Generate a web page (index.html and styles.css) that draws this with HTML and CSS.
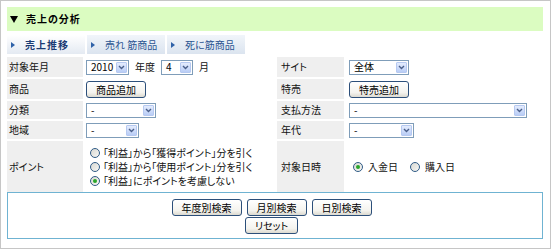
FILE: index.html
```html
<!DOCTYPE html>
<html lang="ja">
<head>
<meta charset="utf-8">
<title>売上の分析</title>
<link rel="stylesheet" href="styles.css">
</head>
<body>
<div class="frame">
  <div class="head">
    <svg class="head-tri" width="8" height="7" viewBox="0 0 8 7"><polygon points="0,0 8,0 4,7" fill="#000"/></svg>
    <span>売上の分析</span>
  </div>

  <div class="tabs">
    <div class="tab active"><svg class="tab-arr" width="4" height="6" viewBox="0 0 4 6"><polygon points="0,0 4,3 0,6" fill="#2f62a8"/></svg><span>売上推移</span></div>
    <div class="tab"><svg class="tab-arr" width="4" height="6" viewBox="0 0 4 6"><polygon points="0,0 4,3 0,6" fill="#2f62a8"/></svg><span>売れ 筋商品</span></div>
    <div class="tab"><svg class="tab-arr" width="4" height="6" viewBox="0 0 4 6"><polygon points="0,0 4,3 0,6" fill="#2f62a8"/></svg><span>死に筋商品</span></div>
  </div>

  <div class="grid">
    <div class="lab">対象年月</div>
    <div class="val">
      <span class="sel w43"><span class="sel-text">2010</span><span class="sel-btn"><svg width="7" height="5" viewBox="0 0 7 5"><path d="M1 1 L3.5 3.5 L6 1" fill="none" stroke="#4a5f8a" stroke-width="1.4"/></svg></span></span>
      <span>年度</span>
      <span class="sel w32"><span class="sel-text">4</span><span class="sel-btn"><svg width="7" height="5" viewBox="0 0 7 5"><path d="M1 1 L3.5 3.5 L6 1" fill="none" stroke="#4a5f8a" stroke-width="1.4"/></svg></span></span>
      <span>月</span>
    </div>
    <div class="lab lab-r">サイト</div>
    <div class="val val-r">
      <span class="sel w60"><span class="sel-text">全体</span><span class="sel-btn"><svg width="7" height="5" viewBox="0 0 7 5"><path d="M1 1 L3.5 3.5 L6 1" fill="none" stroke="#4a5f8a" stroke-width="1.4"/></svg></span></span>
    </div>

    <div class="lab">商品</div>
    <div class="val"><button class="btn" type="button">商品追加</button></div>
    <div class="lab lab-r">特売</div>
    <div class="val val-r"><button class="btn" type="button">特売追加</button></div>

    <div class="lab">分類</div>
    <div class="val">
      <span class="sel w70"><span class="sel-text">-</span><span class="sel-btn"><svg width="7" height="5" viewBox="0 0 7 5"><path d="M1 1 L3.5 3.5 L6 1" fill="none" stroke="#4a5f8a" stroke-width="1.4"/></svg></span></span>
    </div>
    <div class="lab lab-r">支払方法</div>
    <div class="val val-r">
      <span class="sel w178"><span class="sel-text">-</span><span class="sel-btn"><svg width="7" height="5" viewBox="0 0 7 5"><path d="M1 1 L3.5 3.5 L6 1" fill="none" stroke="#4a5f8a" stroke-width="1.4"/></svg></span></span>
    </div>

    <div class="lab">地域</div>
    <div class="val">
      <span class="sel w53"><span class="sel-text">-</span><span class="sel-btn"><svg width="7" height="5" viewBox="0 0 7 5"><path d="M1 1 L3.5 3.5 L6 1" fill="none" stroke="#4a5f8a" stroke-width="1.4"/></svg></span></span>
    </div>
    <div class="lab lab-r">年代</div>
    <div class="val val-r">
      <span class="sel w65"><span class="sel-text">-</span><span class="sel-btn"><svg width="7" height="5" viewBox="0 0 7 5"><path d="M1 1 L3.5 3.5 L6 1" fill="none" stroke="#4a5f8a" stroke-width="1.4"/></svg></span></span>
    </div>

    <div class="lab">ポイント</div>
    <div class="val radios">
      <label class="opt"><span class="radio"></span><span>「利益」から「獲得ポイント」分を引く</span></label>
      <label class="opt"><span class="radio"></span><span>「利益」から「使用ポイント」分を引く</span></label>
      <label class="opt"><span class="radio on"></span><span>「利益」にポイントを考慮しない</span></label>
    </div>
    <div class="lab lab-r">対象日時</div>
    <div class="val val-r dates">
      <label class="opt"><span class="radio on"></span><span>入金日</span></label>
      <label class="opt"><span class="radio"></span><span>購入日</span></label>
    </div>
  </div>

  <div class="actions">
    <div class="btn-row">
      <button class="btn" type="button">年度別検索</button>
      <button class="btn" type="button">月別検索</button>
      <button class="btn" type="button">日別検索</button>
    </div>
    <div class="btn-row">
      <button class="btn" type="button">リセット</button>
    </div>
  </div>
</div>
</body>
</html>
```

FILE: styles.css
```css
html, body {
  margin: 0;
  padding: 0;
  background: #fff;
}

body {
  font-family: "Noto Sans CJK JP", "Noto Sans", sans-serif;
  font-size: 10px;
  color: #111;
  font-feature-settings: "palt";
  line-height: 1.2;
}

.frame {
  width: 551px;
  height: 249px;
  box-sizing: border-box;
  border: 1px solid #c6c6c6;
  padding: 6px 7px 0 6px;
}

.head {
  height: 24px;
  background: #dbfcc1;
  display: flex;
  align-items: center;
  padding-left: 3px;
  font-weight: bold;
  letter-spacing: 1px;
  color: #000;
}

.head-tri {
  margin-right: 8px;
}

.tabs {
  display: flex;
  gap: 2px;
  margin-top: 4px;
  height: 19px;
}

.tab {
  width: 78px;
  display: flex;
  align-items: center;
  padding-left: 4px;
  box-sizing: border-box;
  background: linear-gradient(#f1f5fa, #dbe4ef);
  color: #2b5592;
}

.tab.active {
  background: linear-gradient(#ffffff, #e4eaf2);
  color: #1b3b74;
  font-weight: bold;
  letter-spacing: 1px;
}

.tab-arr {
  margin-right: 10px;
  flex: none;
}

.grid {
  margin-top: 3px;
  display: grid;
  grid-template-columns: 76px 190px 67px 1fr;
  grid-template-rows: 20px 20px 18px 18px 51px;
  gap: 2px;
}

.lab {
  background: #efefef;
  display: flex;
  align-items: center;
  padding-left: 2px;
}

.lab-r {
  padding-left: 4px;
}

.val {
  display: flex;
  align-items: center;
  gap: 6px;
  padding-left: 1px;
}

.val-r {
  padding-left: 3px;
}

.sel {
  display: inline-flex;
  align-items: center;
  height: 15px;
  box-sizing: border-box;
  border: 1px solid #7f9db9;
  background: #fff;
  padding-right: 1px;
}

.sel-text {
  flex: 1;
  padding-left: 4px;
  color: #000;
}

.sel-btn {
  width: 11px;
  height: 11px;
  box-sizing: border-box;
  border: 1px solid #b6c9f1;
  border-radius: 1px;
  background: linear-gradient(#e4ecfd, #b9cdf6);
  display: flex;
  align-items: center;
  justify-content: center;
}

.w32 { width: 32px; }
.w43 { width: 43px; }
.w53 { width: 53px; }
.w60 { width: 60px; }
.w65 { width: 65px; }
.w70 { width: 70px; }
.w178 { width: 178px; }

.btn {
  font-family: inherit;
  font-size: 10px;
  font-feature-settings: "palt";
  height: 17px;
  padding: 0 9px;
  margin: 0;
  border: 1px solid #2c4f7a;
  border-radius: 3px;
  background: linear-gradient(#ffffff, #f4f3ee 70%, #dcdad0);
  color: #000;
  line-height: 15px;
}

.radios {
  flex-direction: column;
  align-items: flex-start;
  justify-content: center;
  gap: 0;
  padding-left: 5px;
}

.opt {
  display: flex;
  align-items: center;
  height: 14px;
}

.radio {
  width: 10px;
  height: 10px;
  box-sizing: border-box;
  border: 1px solid #2f5b86;
  border-radius: 50%;
  background: linear-gradient(135deg, #d8d8d2, #f7f7f4);
  display: inline-flex;
  align-items: center;
  justify-content: center;
  margin-right: 3px;
  flex: none;
}

.radio.on::after {
  content: "";
  width: 4px;
  height: 4px;
  border-radius: 50%;
  background: #2aa62a;
}

.dates {
  padding-left: 7px;
  gap: 12px;
}

.dates .radio {
  margin-right: 5px;
}

.actions {
  height: 47px;
  box-sizing: border-box;
  border: 1px solid #6fb3d2;
  padding: 6px 7px 0 0;
  display: flex;
  flex-direction: column;
  align-items: center;
  gap: 1px;
}

.btn-row {
  display: flex;
  gap: 5px;
}
```
